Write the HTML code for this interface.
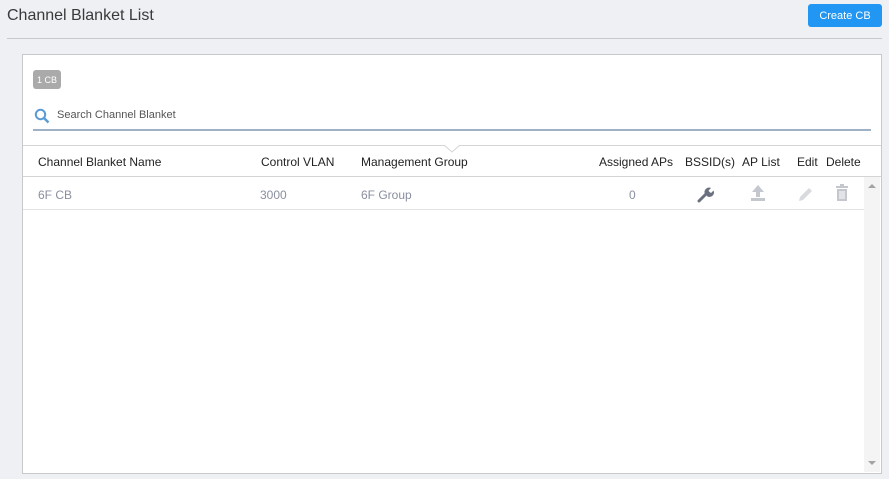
<!DOCTYPE html>
<html><head><style>
body{margin:0;width:889px;height:479px;background:#eff0f4;font-family:"Liberation Sans",sans-serif;position:relative;overflow:hidden}
.a{position:absolute}
.t{font-size:12px;color:#222;white-space:nowrap}
.g{font-size:12px;color:#8a8fa0;white-space:nowrap}
</style></head><body>
<div class="a" style="left:7px;top:7px;font-size:16px;color:#3a3a3a">Channel Blanket List</div>
<div class="a" style="left:808px;top:4px;width:74px;height:23px;background:#2196f3;border-radius:3px;color:#fff;font-size:11px;line-height:24px;text-align:center">Create CB</div>
<div class="a" style="left:7px;top:38px;width:875px;height:1px;background:#c8c9cd"></div>
<div class="a" style="left:22px;top:54px;width:858px;height:418px;border:1px solid #c8c9cd;background:#fff"></div>
<div class="a" style="left:33px;top:70px;width:28px;height:19px;background:#aaa;border-radius:3px;color:#fff;font-size:9px;line-height:20px;text-align:center">1 CB</div>
<svg class="a" style="left:34px;top:108px" width="16" height="16" viewBox="0 0 16 16"><circle cx="6.5" cy="6.5" r="4.7" fill="none" stroke="#5b9bd5" stroke-width="2"/><path d="M10 10l4.5 4.5" stroke="#5b9bd5" stroke-width="2.4"/></svg>
<div class="a" style="left:57px;top:109px;font-size:11px;color:#555">Search Channel Blanket</div>
<div class="a" style="left:33px;top:129px;width:838px;height:2px;background:#9fb1c4"></div>
<div class="a" style="left:23px;top:145px;width:858px;height:1px;background:#d4d4d4"></div>
<svg class="a" style="left:444px;top:144px" width="16" height="10"><path d="M0 1L8 8L16 1" fill="#fff" stroke="#d4d4d4"/></svg>
<div class="a t" style="left:38px;top:155px">Channel Blanket Name</div>
<div class="a t" style="left:261px;top:155px">Control VLAN</div>
<div class="a t" style="left:361px;top:155px">Management Group</div>
<div class="a t" style="left:599px;top:155px">Assigned APs</div>
<div class="a t" style="left:685px;top:155px">BSSID(s)</div>
<div class="a t" style="left:742px;top:155px">AP List</div>
<div class="a t" style="left:797px;top:155px">Edit</div>
<div class="a t" style="left:826px;top:155px">Delete</div>
<div class="a" style="left:23px;top:176px;width:858px;height:1px;background:#d4d4d4"></div>
<div class="a g" style="left:38px;top:188px">6F CB</div>
<div class="a g" style="left:260px;top:188px">3000</div>
<div class="a g" style="left:361px;top:188px">6F Group</div>
<div class="a g" style="left:629px;top:188px">0</div>
<svg class="a" style="left:697px;top:185px" width="18" height="18" viewBox="0 0 18 18"><path d="M2 16L9 9" stroke="#6b7080" stroke-width="3" stroke-linecap="round"/><path d="M8 9a4.5 4.5 0 0 1 6-6l-2.5 2.5 1 1.5 1.5 1 2.5-2.5a4.5 4.5 0 0 1-6 6z" fill="#6b7080"/></svg>
<svg class="a" style="left:750px;top:184px" width="16" height="18" viewBox="0 0 16 18"><path d="M8 1L2 8h4v5h4V8h4z" fill="#c4c7ce"/><rect x="1" y="14" width="14" height="3" fill="#c4c7ce"/></svg>
<svg class="a" style="left:797px;top:185px" width="18" height="18" viewBox="0 0 18 18"><path d="M2 16l1-4 9-9 3 3-9 9z" fill="#d8dade"/></svg>
<svg class="a" style="left:835px;top:184px" width="14" height="18" viewBox="0 0 14 18"><rect x="1" y="2" width="12" height="2" fill="#c4c7ce"/><rect x="5" y="0" width="4" height="2" fill="#c4c7ce"/><path d="M2 5h10v12H2z" fill="#c4c7ce"/><path d="M5 7v8M7 7v8M9 7v8" stroke="#fff" stroke-width="1"/></svg>
<div class="a" style="left:23px;top:209px;width:841px;height:1px;background:#e4e4e4"></div>
<div class="a" style="left:864px;top:177px;width:16px;height:295px;background:#f4f4f4"></div>
<div class="a" style="left:868px;top:184px;width:0;height:0;border-left:4px solid transparent;border-right:4px solid transparent;border-bottom:4px solid #a3a3a3"></div>
<div class="a" style="left:868px;top:461px;width:0;height:0;border-left:4px solid transparent;border-right:4px solid transparent;border-top:4px solid #a3a3a3"></div>
</body></html>
